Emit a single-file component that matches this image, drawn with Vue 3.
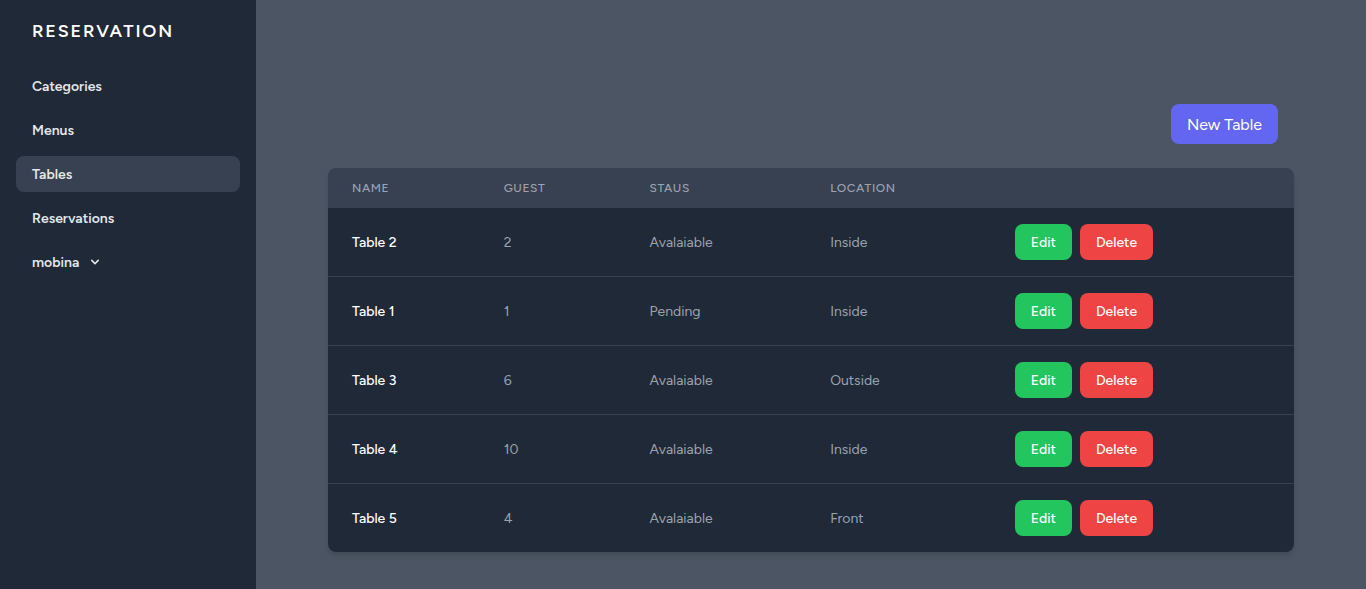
<script setup>
const links = ['Categories', 'Menus', 'Tables', 'Reservations']
const active = 'Tables'
const rows = [
  { name: 'Table 2', guest: 2, status: 'Avalaiable', location: 'Inside' },
  { name: 'Table 1', guest: 1, status: 'Pending', location: 'Inside' },
  { name: 'Table 3', guest: 6, status: 'Avalaiable', location: 'Outside' },
  { name: 'Table 4', guest: 10, status: 'Avalaiable', location: 'Inside' },
  { name: 'Table 5', guest: 4, status: 'Avalaiable', location: 'Front' },
]
</script>

<template>
  <div class="layout">
    <aside class="sidebar">
      <a class="brand" href="#">Reservation</a>
      <nav class="nav">
        <a
          v-for="link in links"
          :key="link"
          class="nav-item"
          :class="{ active: link === active }"
          href="#"
        >{{ link }}</a>
        <button class="nav-item" type="button">
          <span>mobina</span>
          <svg class="chevron" viewBox="0 0 20 20" fill="currentColor" aria-hidden="true">
            <path
              fill-rule="evenodd"
              clip-rule="evenodd"
              d="M5.293 7.293a1 1 0 011.414 0L10 10.586l3.293-3.293a1 1 0 111.414 1.414l-4 4a1 1 0 01-1.414 0l-4-4a1 1 0 010-1.414z"
            />
          </svg>
        </button>
      </nav>
    </aside>

    <main class="main">
      <div class="toolbar">
        <a class="new-table" href="#">New Table</a>
      </div>
      <div class="card">
        <table class="table">
          <colgroup>
            <col class="col-name" />
            <col class="col-guest" />
            <col class="col-status" />
            <col class="col-location" />
            <col />
          </colgroup>
          <thead>
            <tr>
              <th scope="col">Name</th>
              <th scope="col">Guest</th>
              <th scope="col">Staus</th>
              <th scope="col">Location</th>
              <th scope="col" aria-label="Actions"></th>
            </tr>
          </thead>
          <tbody>
            <tr v-for="row in rows" :key="row.name">
              <td class="name">{{ row.name }}</td>
              <td>{{ row.guest }}</td>
              <td>{{ row.status }}</td>
              <td>{{ row.location }}</td>
              <td class="action-cell">
                <div class="actions">
                  <a class="btn edit" href="#">Edit</a>
                  <button class="btn delete" type="button">Delete</button>
                </div>
              </td>
            </tr>
          </tbody>
        </table>
      </div>
    </main>
  </div>
</template>

<style>
body {
  background: #4b5563;
}
</style>

<style scoped>
.layout {
  display: flex;
  min-height: 100vh;
  background: #4b5563;
  font-family: Figtree, Lato, "Liberation Sans", sans-serif;
  font-size: 16px;
  line-height: 24px;
}
.layout *,
.layout {
  box-sizing: border-box;
}
a {
  text-decoration: none;
}
button {
  border: 0;
  font-family: inherit;
  cursor: pointer;
}
.sidebar {
  flex: none;
  width: 256px;
  background: #1f2937;
}
.brand {
  display: block;
  padding: 17px 32px 15px;
  color: #fff;
  font-size: 18px;
  font-weight: 600;
  line-height: 28px;
  letter-spacing: 0.1em;
  text-transform: uppercase;
}
.nav {
  display: flex;
  flex-direction: column;
  gap: 8px;
  padding: 8px 16px;
}
.nav-item {
  display: flex;
  align-items: flex-start;
  padding: 9px 16px 7px;
  border-radius: 8px;
  background: transparent;
  color: #e5e7eb;
  font-size: 14px;
  font-weight: 600;
  line-height: 20px;
}
.nav-item.active {
  background: #374151;
}
.chevron {
  width: 16px;
  height: 16px;
  margin-top: 1px;
  margin-left: 8px;
}
.main {
  flex: 1;
  min-width: 0;
  padding: 104px 72px 36px;
}
.toolbar {
  display: flex;
  justify-content: flex-end;
  margin-bottom: 24px;
  padding-right: 16px;
}
.new-table {
  padding: 9px 16px 7px;
  border-radius: 8px;
  background: #6366f1;
  color: #fff;
}
.card {
  overflow: hidden;
  border-radius: 8px;
  box-shadow: 0 4px 6px -1px rgba(0, 0, 0, 0.1), 0 2px 4px -2px rgba(0, 0, 0, 0.1);
}
.table {
  width: 100%;
  table-layout: fixed;
  border-collapse: collapse;
}
.col-name {
  width: 15.7%;
}
.col-guest {
  width: 15.1%;
}
.col-status {
  width: 18.7%;
}
.col-location {
  width: 19.1%;
}
th {
  padding: 12px 24px;
  background: #374151;
  color: #9ca3af;
  font-size: 12px;
  font-weight: 500;
  line-height: 16px;
  letter-spacing: 0.05em;
  text-align: left;
  text-transform: uppercase;
}
td {
  padding: 18px 24px 16px;
  background: #1f2937;
  color: #9ca3af;
  font-size: 14px;
  line-height: 20px;
  white-space: nowrap;
}
.action-cell {
  padding: 16px 24px;
}
tr + tr td {
  border-top: 1px solid #374151;
}
.name {
  color: #fff;
  font-weight: 500;
}
.actions {
  display: flex;
  gap: 8px;
}
.btn {
  padding: 9px 16px 7px;
  border-radius: 8px;
  color: #fff;
  font-size: 14px;
  font-weight: 500;
  line-height: 20px;
}
.edit {
  background: #22c55e;
}
.delete {
  background: #ef4444;
}
</style>
